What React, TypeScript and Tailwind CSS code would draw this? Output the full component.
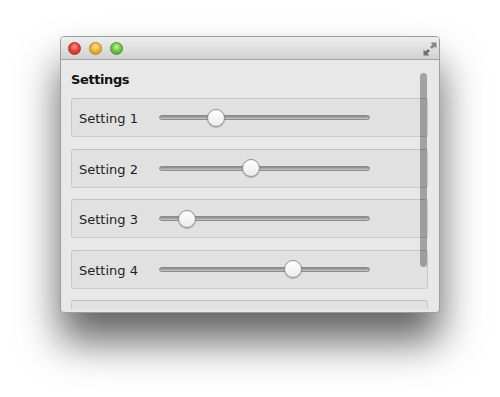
import React from "react";

const settings = [
  { label: "Setting 1", value: 25 },
  { label: "Setting 2", value: 43 },
  { label: "Setting 3", value: 10 },
  { label: "Setting 4", value: 65 },
];

function Slider({ value }: { value: number }) {
  return (
    <div className="relative w-[211px] h-[18px] flex items-center">
      <div className="w-full h-[5px] rounded-full border border-[#8c8c8c] bg-gradient-to-b from-[#858585] to-[#c9c9c9]" />
      <div
        className="absolute top-0 w-[18px] h-[18px] rounded-full border border-[#8f8f8f] bg-gradient-to-b from-[#ffffff] to-[#ececec] shadow-[0_1px_1px_rgba(0,0,0,0.2)]"
        style={{ left: `${(value / 100) * (211 - 18)}px` }}
      />
    </div>
  );
}

export default function App() {
  return (
    <div className="w-[500px] h-[397px] bg-white pl-[60px] pt-[36px] font-['DejaVu_Sans',sans-serif] text-[#1a1a1a]">
      <div className="w-[380px] h-[277px] flex flex-col rounded-[4px] border border-[#9c9c9c] bg-[#e8e8e8] overflow-hidden shadow-[0_28px_42px_rgba(0,0,0,0.62)]">
        <div className="h-[23px] shrink-0 flex items-center justify-between border-b border-[#a3a3a3] bg-gradient-to-b from-[#eeeeee] to-[#d1d1d1] pl-[7px] pr-[1px]">
          <div className="flex gap-[8px] pt-[1px]">
            <div className="w-[13px] h-[13px] rounded-full border border-[#a8332c] bg-[radial-gradient(circle_at_50%_35%,#ff9a90_0%,#e5473d_45%,#b8261d_100%)]" />
            <div className="w-[13px] h-[13px] rounded-full border border-[#b28a24] bg-[radial-gradient(circle_at_50%_35%,#ffe59a_0%,#f0b53a_45%,#c98a14_100%)]" />
            <div className="w-[13px] h-[13px] rounded-full border border-[#4e932f] bg-[radial-gradient(circle_at_50%_35%,#c8f3a0_0%,#74c64c_45%,#3f9a23_100%)]" />
          </div>
          <svg width="16" height="16" viewBox="0 0 16 16" className="mt-[1px]">
            <path d="M8.5 1.5 H14.5 V7.5 L12.5 5.5 L10 8 L8 6 L10.5 3.5 Z" fill="#858585" />
            <path d="M7.5 14.5 H1.5 V8.5 L3.5 10.5 L6 8 L8 10 L5.5 12.5 Z" fill="#707070" />
          </svg>
        </div>
        <div className="relative flex-1 overflow-hidden pl-[10px] pr-[11px] pt-[12px] mb-[3px]">
          <div className="text-[13px] leading-[16px] font-bold tracking-[-0.4px] text-[#111]">Settings</div>
          <div className="mt-[10px] flex flex-col gap-[11.5px]">
            {settings.map((s) => (
              <div
                key={s.label}
                className="h-[39px] shrink-0 flex items-center rounded-[3px] border border-[#c9c9c9] border-t-[#c2c2c2] bg-[#e1e1e1] pl-[7px]"
              >
                <div className="w-[80px] text-[13px] leading-[16px] pt-[3px] text-[#1e1e1e]">{s.label}</div>
                <Slider value={s.value} />
              </div>
            ))}
            <div className="h-[39px] shrink-0 rounded-[3px] border border-[#c9c9c9] border-t-[#bdbdbd] bg-[#e1e1e1]" />
          </div>
          <div className="absolute right-[12px] top-[13px] w-[7px] h-[194px] rounded-full bg-[rgba(0,0,0,0.3)]" />
        </div>
      </div>
    </div>
  );
}
